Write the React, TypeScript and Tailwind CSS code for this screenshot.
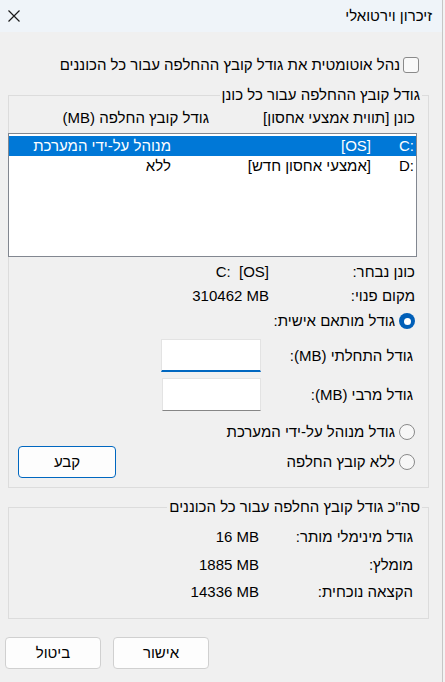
import type { ReactNode } from 'react'

const FONT = { fontFamily: '"Liberation Sans", "DejaVu Sans", sans-serif' }

function Radio({ checked }: { checked?: boolean }) {
  if (checked) {
    return (
      <span className="flex h-[16px] w-[16px] shrink-0 items-center justify-center rounded-full bg-[#005fb8]">
        <span className="h-[7px] w-[7px] rounded-full bg-white" />
      </span>
    )
  }
  return <span className="h-[16px] w-[16px] shrink-0 rounded-full border border-[#8a8a8a] bg-[#f7f7f7]" />
}

function Group({ title, className, children }: { title: string; className?: string; children: ReactNode }) {
  return (
    <fieldset className={`border border-[#dcdcdc] ${className ?? ''}`}>
      <legend className="mr-[6px] px-[2px]">{title}</legend>
      {children}
    </fieldset>
  )
}

function InfoRow({ label, value, labelW, className }: { label: string; value: string; labelW: string; className?: string }) {
  return (
    <div className={`flex h-[20px] ${className ?? ''}`}>
      <span className={labelW}>{label}</span>
      <span dir="ltr" className="whitespace-pre">{value}</span>
    </div>
  )
}

const drives = [
  { letter: 'C:', label: '[OS]', size: 'מנוהל על-ידי המערכת', selected: true },
  { letter: 'D:', label: '[אמצעי אחסון חדש]', size: 'ללא', selected: false },
]

export default function App() {
  return (
    <div dir="ltr" style={FONT} className="flex h-[682px] w-[445px] overflow-hidden bg-[#f3f3f3] text-[15px] leading-[20px] text-black">
      <div dir="rtl" className="flex w-[443px] shrink-0 flex-col border-r border-[#c6c6c6] bg-[#f0f0f0]">
        {/* Title bar */}
        <div className="flex h-[32px] shrink-0 items-center justify-between bg-[#eff4f9] pl-[8px] pr-[10px]">
          <span>זיכרון וירטואלי</span>
          <svg width="12" height="12" viewBox="0 0 12 12" className="text-[#1a1a1a]">
            <path d="M0.5 0.5 L11.5 11.5 M11.5 0.5 L0.5 11.5" stroke="currentColor" strokeWidth="1.2" fill="none" />
          </svg>
        </div>

        <div className="flex flex-col pl-[8px] pr-[13px]">
          {/* Auto manage */}
          <div className="mr-[10px] mt-[23px] flex h-[20px] items-center gap-[3px]">
            <span className="h-[16px] w-[16px] shrink-0 rounded-[3px] border border-[#8a8a8a] bg-[#f9f9f9]" />
            <span>נהל אוטומטית את גודל קובץ ההחלפה עבור כל הכוננים</span>
          </div>

          {/* Per-drive group */}
          <Group title="גודל קובץ ההחלפה עבור כל כונן" className="mt-[10px] pb-[9px]">
            <div className="mt-[3px] flex h-[20px] pr-[13px]">
              <span className="w-[206px]">כונן [תווית אמצעי אחסון]</span>
              <span>גודל קובץ החלפה (MB)</span>
            </div>

            <div className="-ml-[1px] mr-[11px] mt-[5px] h-[124px] border border-[#828790] bg-white pt-[2px]">
              {drives.map((d) => (
                <div
                  key={d.letter}
                  className={`flex h-[20px] items-center ${d.selected ? 'bg-[#0078d7] text-white' : ''}`}
                >
                  <span dir="ltr" className="w-[45px] pr-[2px] text-right">{d.letter}</span>
                  <span className="w-[200px]">{d.label}</span>
                  <span>{d.size}</span>
                </div>
              ))}
            </div>

            <div className="pr-[13px]">
              <InfoRow className="mt-[5px]" labelW="w-[146px]" label="כונן נבחר:" value="C:  [OS]" />
              <InfoRow className="mt-[4px]" labelW="w-[146px]" label="מקום פנוי:" value="310462 MB" />
            </div>

            <div className="mr-[13px] mt-[5px] flex h-[20px] items-center gap-[4px]">
              <Radio checked />
              <span>גודל מותאם אישית:</span>
            </div>

            <div className="mt-[8px] flex h-[33px] items-center pr-[15px]">
              <span className="w-[152px]">גודל התחלתי (MB):</span>
              <div className="h-[33px] w-[100px] border border-b-2 border-[#e3e3e3] border-b-[#0067c0] bg-white" />
            </div>
            <div className="mt-[6px] flex h-[33px] items-center pr-[15px]">
              <span className="w-[152px]">גודל מרבי (MB):</span>
              <div className="h-[33px] w-[99px] border border-[#e3e3e3] border-b-[#868686] bg-white" />
            </div>

            <div className="mr-[13px] mt-[11px] flex h-[20px] items-center gap-[4px]">
              <Radio />
              <span>גודל מנוהל על-ידי המערכת</span>
            </div>

            <div className="mt-[4px] flex h-[32px] items-center justify-between pl-[9px] pr-[13px]">
              <div className="flex items-center gap-[4px]">
                <Radio />
                <span>ללא קובץ החלפה</span>
              </div>
              <button className="h-[32px] w-[98px] rounded-[4px] border border-[#0067c0] bg-[#fdfdfd]">קבע</button>
            </div>
          </Group>

          {/* Totals group */}
          <Group title={'סה"כ גודל קובץ החלפה עבור כל הכוננים'} className="mt-[9px] pb-[16px]">
            <div className="pr-[15px]">
              <InfoRow className="mt-[10px]" labelW="w-[154px]" label="גודל מינימלי מותר:" value="16 MB" />
              <InfoRow className="mt-[8px]" labelW="w-[154px]" label="מומלץ:" value="1885 MB" />
              <InfoRow className="mt-[7px]" labelW="w-[154px]" label="הקצאה נוכחית:" value="14336 MB" />
            </div>
          </Group>

          {/* Dialog buttons */}
          <div className="-ml-[3px] mt-[18px] flex justify-end gap-[12px]">
            <button className="h-[32px] w-[96px] rounded-[4px] border border-[#d0d0d0] bg-[#fdfdfd]">אישור</button>
            <button className="h-[32px] w-[96px] rounded-[4px] border border-[#d0d0d0] bg-[#fdfdfd]">ביטול</button>
          </div>
        </div>
      </div>
    </div>
  )
}
